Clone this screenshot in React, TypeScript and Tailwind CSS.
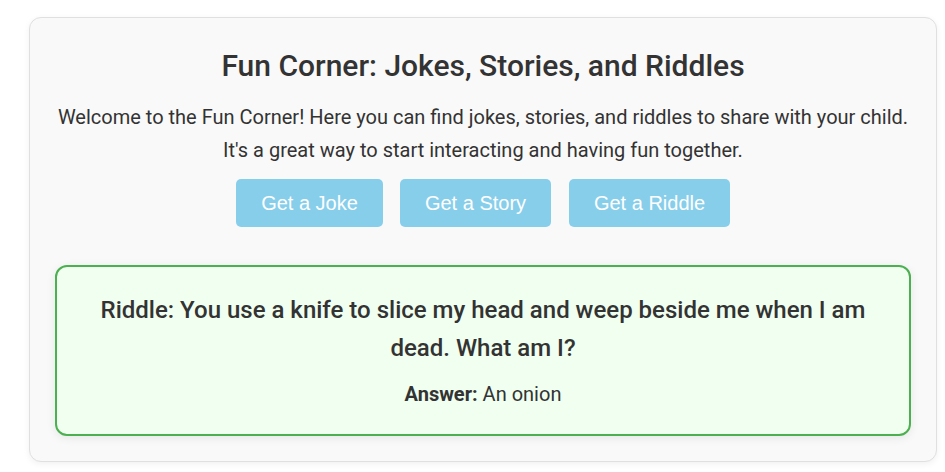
export default function App() {
  return (
    <div className="min-h-screen bg-white pt-[17px] pl-[29px] pr-[8px]" style={{ fontFamily: "Roboto, 'Noto Sans', sans-serif" }}>
      <div className="w-[908px] rounded-[12px] border border-[#e0e0e0] bg-[#f9f9f9] px-[25px] pt-[25px] pb-[25px] text-[#333] shadow-[0_2px_6px_rgba(0,0,0,0.06)]">
        <h2 className="text-center text-[30px] font-medium leading-[46px]">Fun Corner: Jokes, Stories, and Riddles</h2>
        <p className="mt-[11.5px] text-center text-[20px] leading-[33px]">
          Welcome to the Fun Corner! Here you can find jokes, stories, and riddles to share with your child.
          <br />
          It's a great way to start interacting and having fun together.
        </p>
        <div className="mt-[12.5px] flex justify-center" style={{ fontFamily: "'Liberation Sans', Arial, sans-serif" }}>
          <button className="mr-[17px] h-[48px] w-[147px] rounded-[5px] bg-[#87ceeb] text-[20px] text-white">Get a Joke</button>
          <button className="mr-[18px] h-[48px] w-[151px] rounded-[5px] bg-[#87ceeb] text-[20px] text-white">Get a Story</button>
          <button className="h-[48px] w-[161px] rounded-[5px] bg-[#87ceeb] text-[20px] text-white">Get a Riddle</button>
        </div>
        <div className="mt-[38px] rounded-[12px] border-2 border-[#4caf50] bg-[#f0fff0] px-[20px] pt-[24px] pb-[26.5px] text-center shadow-[0_2px_10px_rgba(0,0,0,0.08)]">
          <p className="text-[24px] font-medium leading-[38px]">
            Riddle: You use a knife to slice my head and weep beside me when I am dead. What am I?
          </p>
          <p className="mt-[13.5px] text-[20px] leading-[27px]">
            <span className="font-bold">Answer:</span> An onion
          </p>
        </div>
      </div>
    </div>
  );
}
